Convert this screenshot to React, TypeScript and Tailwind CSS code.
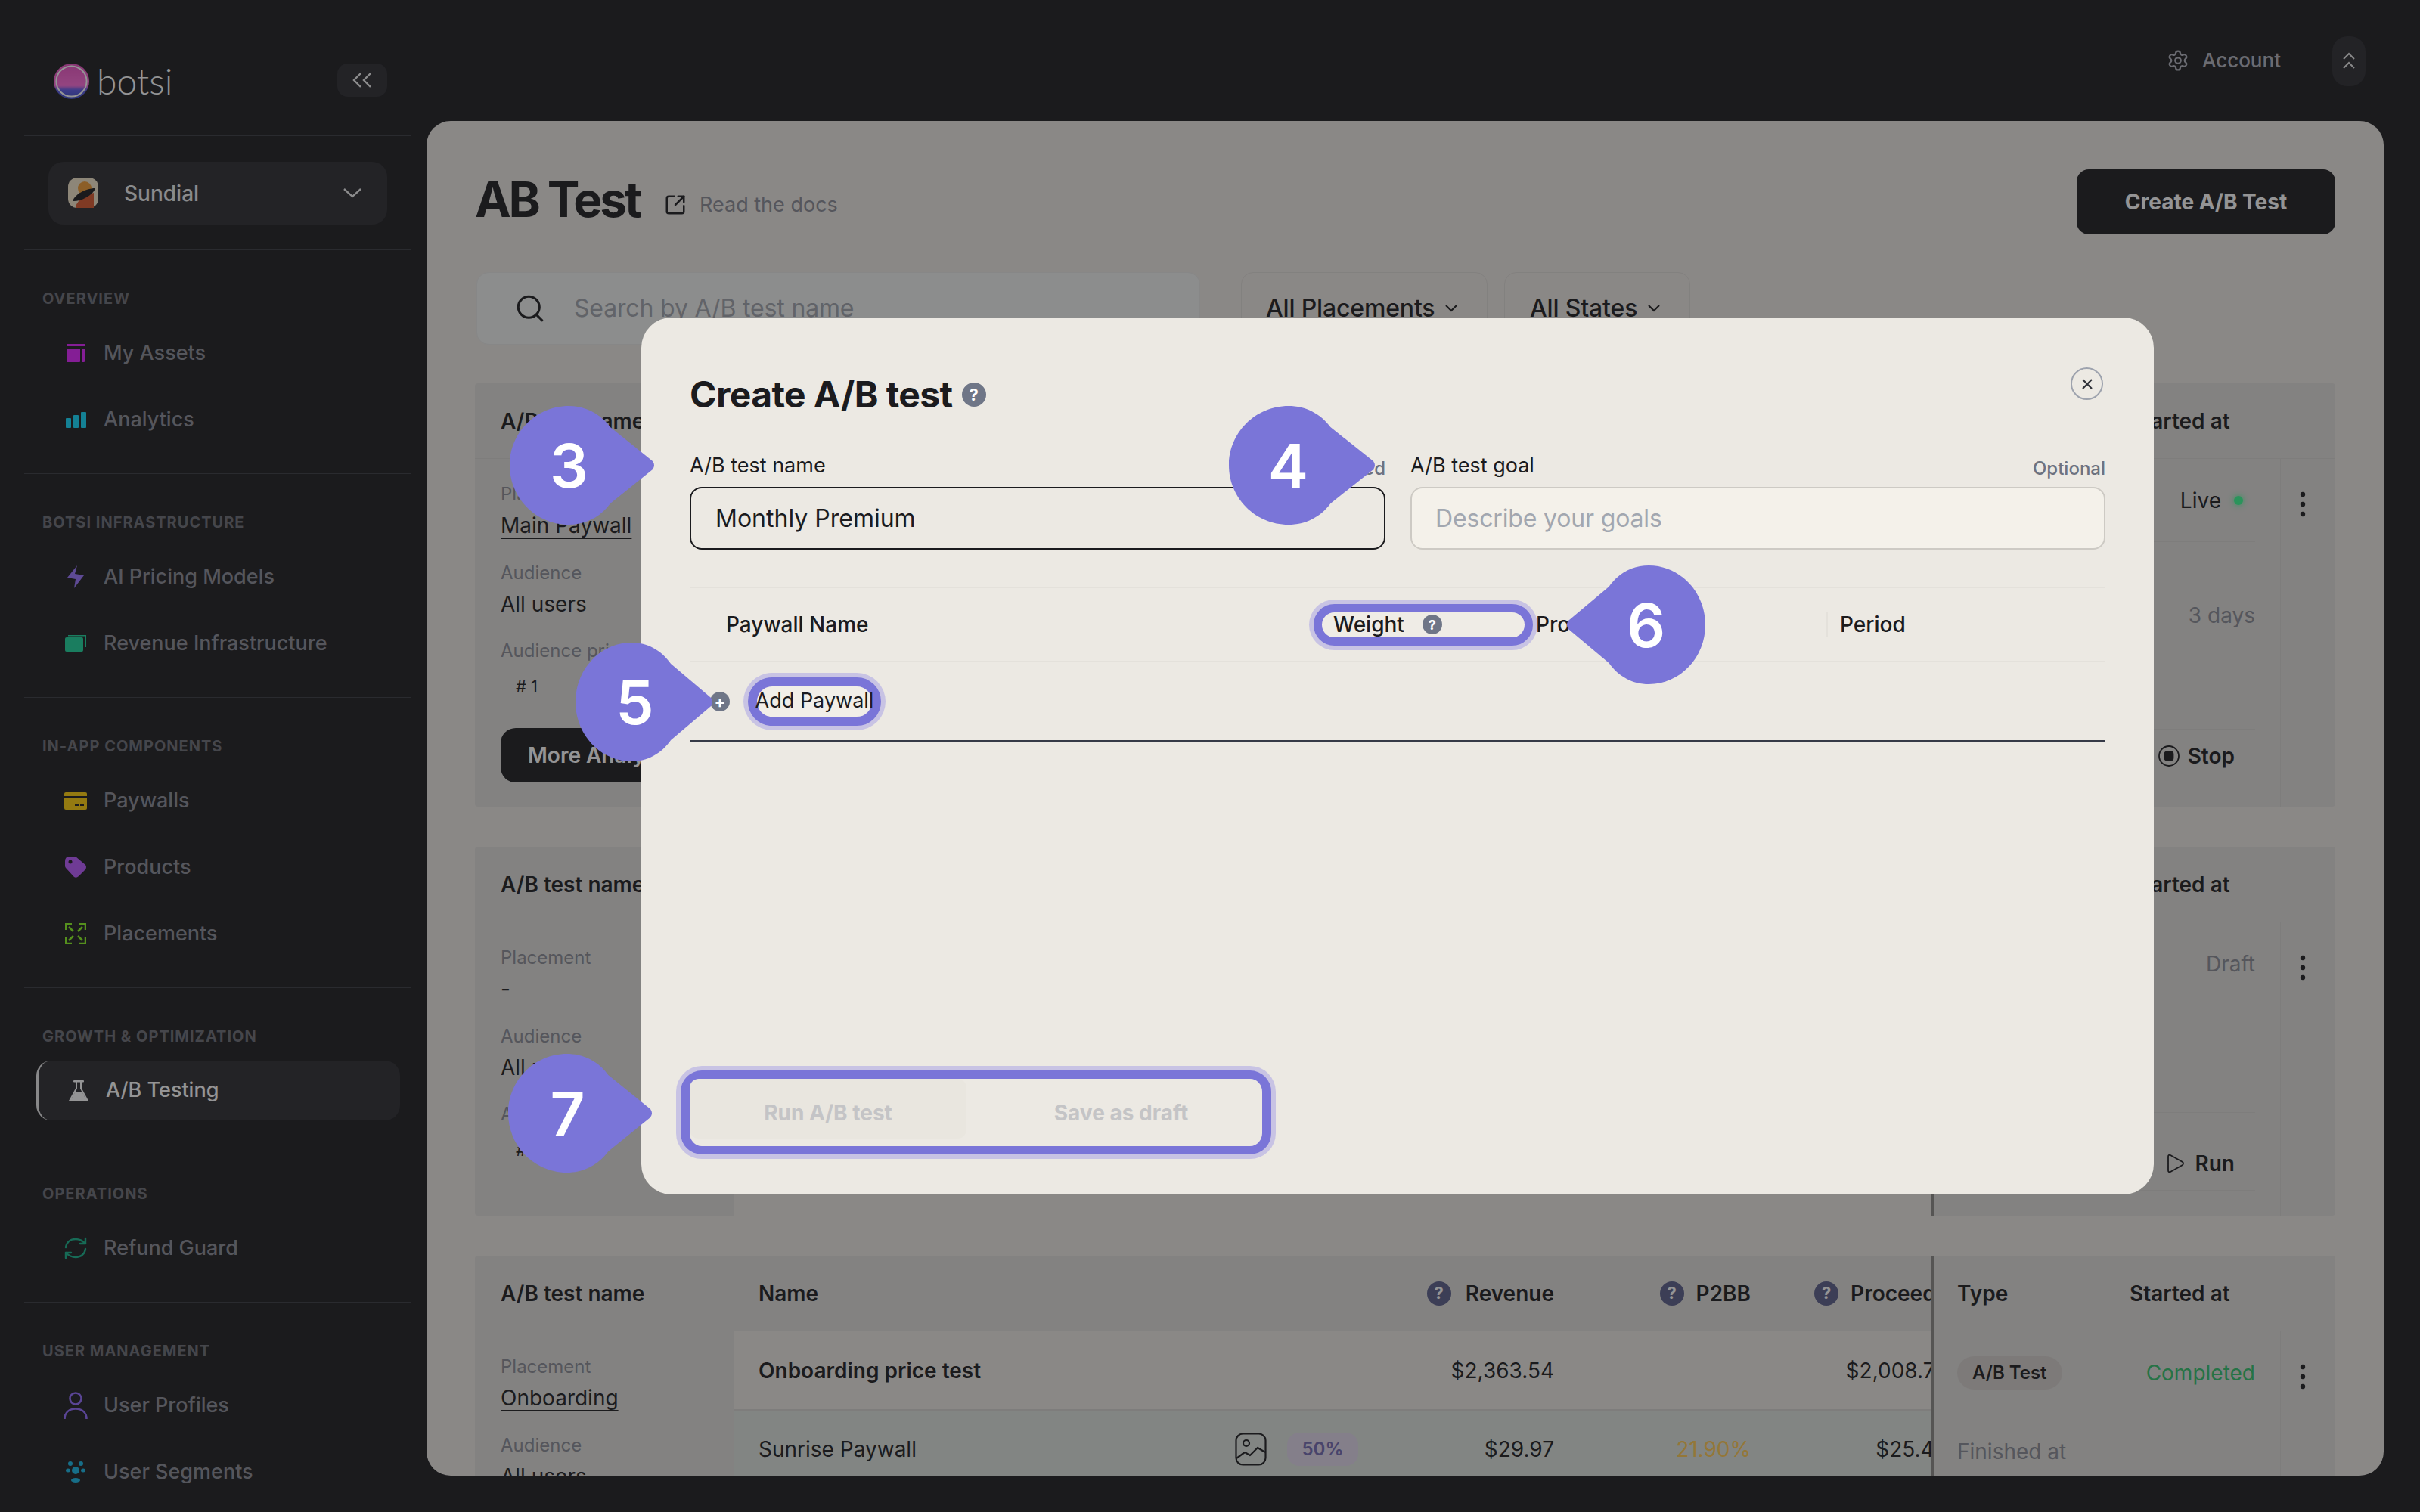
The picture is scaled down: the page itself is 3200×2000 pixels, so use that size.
import type { ReactNode } from "react";
import { Search, Settings, SquareArrowOutUpRight } from "lucide-react";

type NavItem = { label: string; icon: ReactNode; active?: boolean };

const navSections: { title: string; items: NavItem[] }[] = [
  {
    title: "OVERVIEW",
    items: [
      {
        label: "My Assets",
        icon: (
          <svg viewBox="0 0 24 24" className="h-[24px] w-[24px]" fill="#e021ff">
            <rect x="0" y="0" width="24" height="3" />
            <rect x="0" y="6" width="18" height="18" rx="1" />
            <rect x="20" y="6" width="4" height="18" rx="1" />
          </svg>
        ),
      },
      {
        label: "Analytics",
        icon: (
          <svg viewBox="0 0 27 21" className="h-[21px] w-[27px]" fill="#0edcff">
            <rect x="0" y="8" width="7" height="13" rx="1" />
            <rect x="10" y="4" width="7" height="17" rx="1" />
            <rect x="20" y="0" width="7" height="21" rx="1" />
          </svg>
        ),
      },
    ],
  },
  {
    title: "BOTSI INFRASTRUCTURE",
    items: [
      {
        label: "AI Pricing Models",
        icon: (
          <svg viewBox="0 0 22 30" className="h-[30px] w-[22px]" fill="#9a74ff">
            <path d="M13 0 L10 11 L22 13 L9 30 L11 18 L0 16 Z" />
          </svg>
        ),
      },
      {
        label: "Revenue Infrastructure",
        icon: (
          <svg viewBox="0 0 28 22" className="h-[22px] w-[28px]" fill="#19d49a">
            <path d="M4 0 H28 V16 H26.5 V1.5 H4 Z" />
            <rect x="0" y="3" width="24" height="19" rx="2" />
          </svg>
        ),
      },
    ],
  },
  {
    title: "IN-APP COMPONENTS",
    items: [
      {
        label: "Paywalls",
        icon: (
          <svg viewBox="0 0 30 23" className="h-[23px] w-[30px]">
            <rect width="30" height="23" rx="2" fill="#ffcf06" />
            <rect y="5" width="30" height="2" fill="#1b1b1e" />
            <rect x="14" y="16" width="5" height="2" fill="#1b1b1e" />
            <rect x="21" y="16" width="5" height="2" fill="#1b1b1e" />
          </svg>
        ),
      },
      {
        label: "Products",
        icon: (
          <svg viewBox="0 0 28 28" className="h-[28px] w-[28px]">
            <path d="M6 0 H14 L27 11 Q29 14 27 17 L18 26 Q15 29 12 27 L1 15 Q0 14 0 12 V6 Q0 0 6 0 Z" fill="#ba58ff" />
            <circle cx="7" cy="7" r="2.5" fill="#1b1b1e" />
          </svg>
        ),
      },
      {
        label: "Placements",
        icon: (
          <svg viewBox="0 0 28 28" className="h-[28px] w-[28px]" fill="none" stroke="#88f81d" strokeWidth="2.5">
            <path d="M1 9 V1 H9 M19 1 H27 V9 M27 19 V27 H19 M9 27 H1 V19" />
            <path d="M5 5 L11 11 M23 5 L17 11 M23 23 L17 17 M5 23 L11 17" />
          </svg>
        ),
      },
    ],
  },
  {
    title: "GROWTH & OPTIMIZATION",
    items: [
      {
        label: "A/B Testing",
        active: true,
        icon: (
          <svg viewBox="0 0 26 28" className="h-[28px] w-[26px]" fill="#ffffff">
            <rect x="6" y="0" width="14" height="2.5" rx="1" />
            <path d="M9 2 H11 V11 L4 24 H22 L15 11 V2 H17 V10.5 L26 27 Q26 28 24 28 H2 Q0 28 0 27 L9 10.5 Z" />
            <path d="M8 16 H18 L23 26 H3 Z" />
          </svg>
        ),
      },
    ],
  },
  {
    title: "OPERATIONS",
    items: [
      {
        label: "Refund Guard",
        icon: (
          <svg viewBox="0 0 30 30" className="h-[30px] w-[30px]" fill="none" stroke="#13b289" strokeWidth="2.4" strokeLinecap="round" strokeLinejoin="round">
            <path d="M2 14 C3 7 8 3 15 3 C20 3 24 5 28 9" />
            <path d="M28 2 V9 H21" />
            <path d="M28 16 C27 23 22 27 15 27 C10 27 6 25 2 21" />
            <path d="M2 28 V21 H9" />
          </svg>
        ),
      },
    ],
  },
  {
    title: "USER MANAGEMENT",
    items: [
      {
        label: "User Profiles",
        icon: (
          <svg viewBox="0 0 32 36" className="h-[36px] w-[32px]" fill="none" stroke="#926aff" strokeWidth="2.6">
            <circle cx="16" cy="9" r="7.5" />
            <path d="M1.5 36 C1.5 27 8 22.5 16 22.5 C24 22.5 30.5 27 30.5 36" />
          </svg>
        ),
      },
      {
        label: "User Segments",
        icon: (
          <svg viewBox="0 0 26 28" className="h-[28px] w-[26px]" fill="#13b8e6">
            <circle cx="6" cy="3" r="3" />
            <circle cx="20" cy="3" r="3" />
            <circle cx="13" cy="12" r="5" />
            <ellipse cx="3" cy="12" rx="3" ry="2.5" />
            <ellipse cx="23" cy="12" rx="3" ry="2.5" />
            <ellipse cx="13" cy="25" rx="6" ry="3" />
          </svg>
        ),
      },
    ],
  },
];

function Sidebar() {
  return (
    <aside className="flex w-[564px] shrink-0 flex-col pl-[32px] pr-[20px]">
      <div className="flex h-[180px] shrink-0 items-start border-b border-[#37393f]">
        <div className="ml-[39px] mt-[84px] flex items-center gap-[10px]">
          <svg viewBox="0 0 48 48" className="h-[47px] w-[47px]">
            <defs>
              <linearGradient id="orb" x1="0" y1="0" x2="0" y2="1">
                <stop offset="0" stopColor="#e850c0" />
                <stop offset="0.62" stopColor="#ff6ad8" />
                <stop offset="0.75" stopColor="#5a58e8" />
                <stop offset="1" stopColor="#3a4ac8" />
              </linearGradient>
            </defs>
            <circle cx="24" cy="24" r="24" fill="url(#orb)" />
            <circle cx="24" cy="24" r="20.5" fill="none" stroke="#ffffff" strokeWidth="2" />
          </svg>
          <span className="-mt-[2px] font-['Lato',sans-serif] text-[48px] leading-[48px] font-light text-white">botsi</span>
        </div>
        <button className="ml-auto mr-[32px] mt-[84px] flex h-[44px] w-[66px] items-center justify-center rounded-[14px] bg-[#2a2a2e]">
          <svg viewBox="0 0 26 20" className="h-[20px] w-[26px]" fill="none" stroke="#f0f0f0" strokeWidth="2.4">
            <path d="M11 1 L2 10 L11 19 M24 1 L15 10 L24 19" />
          </svg>
        </button>
      </div>

      <div className="flex h-[151px] shrink-0 items-center border-b border-[#37393f] px-[32px]">
        <div className="flex h-[83px] w-full items-center rounded-[20px] bg-[#2a2a2e] pl-[26px] pr-[34px]">
          <svg viewBox="0 0 40 40" className="h-[40px] w-[40px]">
            <rect width="40" height="40" rx="12" fill="#f1e4c8" />
            <circle cx="22" cy="14" r="9" fill="#f09a30" />
            <path d="M10 38 Q14 26 34 20 V40 H10 Z" fill="#d8562a" />
            <path d="M6 31 C10 20 26 14 36 14 C34 22 18 32 6 31 Z" fill="#1b1b1e" />
          </svg>
          <span className="ml-[34px] mt-[1px] text-[28px] font-medium text-[#edeeef]">Sundial</span>
          <svg viewBox="0 0 24 13" className="ml-auto h-[13px] w-[24px]" fill="none" stroke="#f0f0f0" strokeWidth="2.4">
            <path d="M1 1 L12 11 L23 1" />
          </svg>
        </div>
      </div>

      {navSections.map((section, i) => (
        <section
          key={section.title}
          className={`shrink-0 pt-[52px] pb-[27px] ${i < navSections.length - 1 ? "border-b border-[#37393f]" : ""}`}
        >
          <h3 className="h-[24px] pl-[24px] text-[20px] leading-[24px] font-bold tracking-[0.05em] text-[#6a6c74]">{section.title}</h3>
          <ul className="mt-[16px]">
            {section.items.map((item) =>
              item.active ? (
                <li key={item.label} className="h-[88px] pt-[4px]">
                  <div className="ml-[16px] flex h-[79px] w-[481px] items-center rounded-[20px] border-l-[3px] border-[#e8e8e8] bg-[#2a2a2e] pl-[37px]">
                    <span className="flex w-[32px] justify-center">{item.icon}</span>
                    <span className="ml-[20px] text-[27px] font-medium text-white">{item.label}</span>
                  </div>
                </li>
              ) : (
                <li key={item.label} className="flex h-[88px] items-center pl-[52px]">
                  <span className="flex w-[32px] justify-center">{item.icon}</span>
                  <span className="ml-[21px] text-[27px] font-medium text-[#888a94]">{item.label}</span>
                </li>
              ),
            )}
          </ul>
        </section>
      ))}
    </aside>
  );
}

function HelpDot({ size, tone }: { size: string; tone: string }) {
  return (
    <span className={`flex shrink-0 items-center justify-center rounded-full font-bold text-white ${size} ${tone}`}>?</span>
  );
}

function Field({ label, children, tall }: { label: string; children: ReactNode; tall?: boolean }) {
  return (
    <div>
      <div className="h-[32px] text-[24px] leading-[32px] text-[#888a94]">{label}</div>
      <div className={`mt-[5px] text-[#1b1b1e] ${tall ? "h-[52px] pl-[20px] text-[22px] leading-[52px]" : "h-[40px] text-[28px] leading-[40px]"}`}>{children}</div>
    </div>
  );
}

function Metric({ label, width }: { label: string; width: string }) {
  return (
    <div className={`flex shrink-0 items-center justify-end gap-[16px] ${width}`}>
      <HelpDot size="h-[32px] w-[32px] text-[22px]" tone="bg-[#595d89]" />
      <span className="text-[28px] font-semibold text-[#1b1b1e]">{label}</span>
    </div>
  );
}

function Dots() {
  return (
    <svg viewBox="0 0 10 34" className="h-[34px] w-[10px]" fill="#1b1b1e">
      <circle cx="5" cy="4" r="3.2" />
      <circle cx="5" cy="17" r="3.2" />
      <circle cx="5" cy="30" r="3.2" />
    </svg>
  );
}

function TestCard({
  height,
  placement,
  underline,
  priority,
  more,
  midRows,
  status,
  middle,
  action,
}: {
  height: string;
  placement: string;
  underline?: boolean;
  priority?: boolean;
  more?: boolean;
  midRows?: ReactNode;
  status: ReactNode;
  middle: ReactNode;
  action?: ReactNode;
}) {
  return (
    <div className={`flex w-full shrink-0 overflow-hidden rounded-[4px] bg-[#dfddd9] ${height}`}>
      <div className="w-[342px] shrink-0">
        <div className="flex h-[100px] items-center border-b border-[#d6d4d0] pl-[34px] text-[28px] font-semibold text-[#1b1b1e]">A/B test name</div>
        <div className="flex flex-col gap-[27px] pl-[34px] pt-[31px]">
          <Field label="Placement">
            <span className={underline ? "underline underline-offset-[6px] decoration-2" : ""}>{placement}</span>
          </Field>
          <Field label="Audience">All users</Field>
          {priority && (
            <div className="-mt-[1px]">
              <Field label="Audience priority" tall>
                # 1
              </Field>
            </div>
          )}
        </div>
        {more && (
          <button className="ml-[34px] mt-[29px] flex h-[72px] w-[400px] items-center whitespace-nowrap rounded-[20px] bg-[#1b1b1e] pl-[36px] text-[28px] font-semibold text-white">
            More Analytics
          </button>
        )}
      </div>

      <div className="min-w-0 flex-1 overflow-hidden">
        <div className="flex h-[100px] w-[1700px] items-center border-b border-[#d6d4d0]">
          <div className="w-[1085px] shrink-0 pl-[33px]">
            <div className="flex items-center justify-between">
              <span className="text-[28px] font-semibold text-[#1b1b1e]">Name</span>
              <div className="flex items-center gap-[19px]">
                <HelpDot size="h-[32px] w-[32px] text-[22px]" tone="bg-[#595d89]" />
                <span className="text-[28px] font-semibold text-[#1b1b1e]">Revenue</span>
              </div>
            </div>
          </div>
          <Metric label="P2BB" width="w-[260px]" />
          <Metric label="Proceeds" width="w-[260px]" />
        </div>
        {midRows ?? <div className="h-full bg-[#ece8e3]" />}
      </div>

      <div className="flex w-[534px] shrink-0 flex-col border-l-[3px] border-[#8a8884]">
        <div className="flex h-[100px] shrink-0 items-center border-b border-[#d6d4d0] pl-[31px] text-[28px] font-semibold text-[#1b1b1e]">
          <span className="w-[228px]">Type</span>
          <span>Started at</span>
        </div>
        <div className="flex flex-1">
          <div className="w-[458px] shrink-0 pl-[31px] pr-[33px]">
            <div className="flex h-[110px] items-center justify-between border-b border-[#d6d4d0]">
              <span className="flex h-[44px] items-center rounded-full bg-[#d4cfcb] px-[20px] text-[24px] font-semibold text-[#1b1b1e]">A/B Test</span>
              {status}
            </div>
            {middle}
            {action}
          </div>
          <div className="flex-1 border-l border-[#d6d4d0] pl-[24px] pt-[43px]">
            <Dots />
          </div>
        </div>
      </div>
    </div>
  );
}

function MainPanel() {
  return (
    <main className="flex min-w-0 flex-1 flex-col pr-[48px] pb-[48px]">
      <div className="flex h-[160px] shrink-0 items-start justify-end pr-[24px]">
        <div className="mr-[68px] mt-[60px] flex items-center gap-[17px] text-[#b0b2bc]">
          <Settings size={30} strokeWidth={1.8} />
          <span className="text-[26px] font-medium">Account</span>
        </div>
        <button className="mt-[48px] flex h-[66px] w-[44px] flex-col items-center justify-center rounded-[20px] bg-[#2a2a2e]">
          <svg viewBox="0 0 16 24" className="h-[24px] w-[16px]" fill="none" stroke="#e8e8e8" strokeWidth="2">
            <path d="M1 9 L8 2 L15 9 M1 21 L8 14 L15 21" />
          </svg>
        </button>
      </div>

      <div className="flex min-h-0 flex-1 flex-col gap-[53px] overflow-hidden rounded-[32px] bg-[#ece8e3] pl-[66px] pr-[64px] pt-[64px]">
        <div>
          <div className="flex h-[86px] items-center">
            <h1 className="-ml-[2px] -mt-[6px] text-[64px] leading-none font-bold tracking-[-0.05em] text-[#1b1b1e]">AB Test</h1>
            <SquareArrowOutUpRight size={30} strokeWidth={2} className="ml-[32px] mt-[8px] text-[#1b1b1e]" />
            <span className="ml-[17px] mt-[8px] text-[27px] text-[#888a94]">Read the docs</span>
            <button className="ml-auto h-[86px] w-[342px] rounded-[16px] bg-[#1b1b1e] text-[28px] font-bold text-white">Create A/B Test</button>
          </div>
          <div className="mt-[50px] flex h-[96px] items-center">
            <div className="flex h-full w-[957px] items-center rounded-[16px] border border-[#e6e6e4] bg-[#f0f2f0] pl-[49px]">
              <Search size={42} strokeWidth={1.8} className="text-[#1b1b1e]" />
              <span className="ml-[37px] text-[32px] tracking-[-0.005em] text-[#9fa3ab]">Search by A/B test name</span>
            </div>
            <div className="ml-[54px] flex h-full w-[326px] items-center gap-[14px] rounded-[16px] border border-[#dedbd6] pl-[32px] text-[32px] font-medium tracking-[-0.005em] text-[#1b1b1e]">
              All Placements
              <svg viewBox="0 0 16 10" className="h-[10px] w-[16px]" fill="none" stroke="#1b1b1e" strokeWidth="2.2"><path d="M1 1 L8 8 L15 1" /></svg>
            </div>
            <div className="ml-[22px] flex h-full w-[246px] items-center gap-[14px] rounded-[16px] border border-[#dedbd6] pl-[33px] text-[32px] font-medium tracking-[-0.005em] text-[#1b1b1e]">
              All States
              <svg viewBox="0 0 16 10" className="h-[10px] w-[16px]" fill="none" stroke="#1b1b1e" strokeWidth="2.2"><path d="M1 1 L8 8 L15 1" /></svg>
            </div>
          </div>
        </div>

        <div className="-ml-[2px] -mt-[2px] flex flex-col gap-[53px]">
          <TestCard
            height="h-[560px]"
            placement="Main Paywall"
            underline
            priority
            more
            status={
              <span className="mr-[16px] flex items-center gap-[17px] text-[28px] text-[#1b1b1e]">
                Live
                <span className="h-[12px] w-[12px] rounded-full bg-[#37ff92] shadow-[0_0_8px_#37ff92]" />
              </span>
            }
            middle={
              <div className="h-[248px] border-b border-[#d6d4d0] pt-[82px] text-right text-[28px] leading-[30px] text-[#888a94]">3 days</div>
            }
            action={
              <div className="flex h-[70px] items-center justify-end gap-[11px] pr-[27px] text-[28px] font-semibold text-[#1b1b1e]">
                <svg viewBox="0 0 28 28" className="h-[28px] w-[28px]" fill="none" stroke="#1b1b1e" strokeWidth="1.8">
                  <circle cx="14" cy="14" r="13" />
                  <rect x="8.5" y="8.5" width="11" height="11" rx="3" fill="#1b1b1e" />
                </svg>
                Stop
              </div>
            }
          />
          <TestCard
            height="h-[488px]"
            placement="-"
            priority
            status={<span className="text-[28px] text-[#888a94]">Draft</span>}
            middle={<div className="h-[142px] border-b border-[#d6d4d0]" />}
            action={
              <div className="flex h-[103px] items-center justify-end gap-[13px] border-b border-[#d6d4d0] pr-[27px] pt-[32px] text-[28px] font-semibold text-[#1b1b1e]">
                <svg viewBox="0 0 24 26" className="h-[26px] w-[24px]" fill="none" stroke="#1b1b1e" strokeWidth="1.8" strokeLinejoin="round">
                  <path d="M2 4 Q2 1 5 2 L21 11 Q23 13 21 15 L5 24 Q2 25 2 22 Z" />
                </svg>
                Run
              </div>
            }
          />
          <TestCard
            height="h-[600px]"
            placement="Onboarding"
            underline
            midRows={
              <>
                <div className="flex h-[105px] w-[1700px] items-center border-b-[2px] border-[#d6d4d0] bg-[#ece8e3] text-[28px] text-[#1b1b1e]">
                  <div className="flex w-[1085px] shrink-0 items-center justify-between pl-[33px]">
                    <span className="font-semibold">Onboarding price test</span>
                    <span>$2,363.54</span>
                  </div>
                  <div className="w-[260px] shrink-0" />
                  <div className="w-[260px] shrink-0 text-right">$2,008.74</div>
                </div>
                <div className="flex h-[120px] w-[1700px] items-center bg-[#dde3dd] pb-[18px] text-[28px] text-[#1b1b1e]">
                  <div className="flex w-[1085px] shrink-0 items-center pl-[33px]">
                    <span className="w-[630px]">Sunrise Paywall</span>
                    <svg viewBox="0 0 42 44" className="h-[44px] w-[42px]" fill="none" stroke="#1b1b1e" strokeWidth="2.2" strokeLinejoin="round">
                      <rect x="1.5" y="1.5" width="39" height="41" rx="9" />
                      <circle cx="15" cy="14" r="4" />
                      <path d="M2 34 L13 26 L20 30 L30 20 L40 26" />
                    </svg>
                    <span className="ml-[27px] flex h-[44px] w-[94px] items-center justify-center rounded-[16px] bg-[#e0d8ea] text-[24px] font-semibold text-[#7068b0]">50%</span>
                    <span className="ml-auto">$29.97</span>
                  </div>
                  <div className="w-[260px] shrink-0 text-right text-[#ffc850]">21.90%</div>
                  <div className="w-[260px] shrink-0 text-right">$25.48</div>
                </div>
              </>
            }
            status={<span className="text-[28px] text-[#2fc06a]">Completed</span>}
            middle={<div className="pt-[34px] text-[28px] leading-[30px] text-[#888a94]">Finished at</div>}
          />
        </div>
      </div>
    </main>
  );
}

function Callout({ n, className, flip }: { n: number; className: string; flip?: boolean }) {
  return (
    <div className={`absolute h-[157px] ${className}`}>
      <svg viewBox="0 0 192 157" preserveAspectRatio="none" className={`absolute inset-0 h-full w-full ${flip ? "-scale-x-100" : ""}`}>
        <path
          d="M78 0 C100 0 120 10 133 28 L189 73 Q193 78.5 189 84 L133 129 C120 147 100 157 78 157 C35 157 0 122 0 78.5 C0 35 35 0 78 0 Z"
          fill="#7a75d8"
        />
      </svg>
      <div className={`absolute top-0 flex h-[157px] w-[157px] items-center justify-center text-[80px] font-semibold text-white ${flip ? "right-0" : "left-0"}`}>{n}</div>
    </div>
  );
}

function CreateModal() {
  return (
    <div className="absolute left-[848px] top-[420px] flex h-[1160px] w-[2000px] flex-col rounded-[40px] bg-[#ece9e3] px-[64px] pb-[53px] pt-[72px] text-[#1b1b1e]">
      <div className="flex h-[60px] items-start justify-between">
        <div className="flex h-[60px] items-center gap-[12px]">
          <h2 className="text-[48px] leading-none font-bold tracking-[-0.012em]">Create A/B test</h2>
          <HelpDot size="h-[32px] w-[32px] text-[22px]" tone="bg-[#6f7687]" />
        </div>
        <button className="-mt-[6px] mr-[3px] flex h-[43px] w-[43px] items-center justify-center rounded-full border-[2.5px] border-[#9ea3ae]">
          <svg viewBox="0 0 16 16" className="h-[16px] w-[16px]" fill="none" stroke="#30323a" strokeWidth="2.2">
            <path d="M2 2 L14 14 M14 2 L2 14" />
          </svg>
        </button>
      </div>

      <div className="mt-[46px] grid grid-cols-[920px_919px] gap-x-[33px]">
        <div>
          <div className="flex h-[36px] items-center justify-between">
            <span className="text-[27px]">A/B test name</span>
            <span className="mt-[8px] text-[24px] font-medium text-[#6d7280]">Required</span>
          </div>
          <div className="mt-[10px] flex h-[83px] items-center rounded-[16px] border-[2.5px] border-[#1b1b1e] pl-[32px] text-[32px]">Monthly Premium</div>
        </div>
        <div>
          <div className="flex h-[36px] items-center justify-between">
            <span className="text-[27px]">A/B test goal</span>
            <span className="mt-[8px] text-[24px] font-medium text-[#6d7280]">Optional</span>
          </div>
          <div className="mt-[10px] flex h-[83px] items-center rounded-[16px] border-[2.5px] border-[#cdcac4] bg-[#f4f1ea] pl-[31px] text-[32px] tracking-[-0.005em] text-[#a2a7b0]">Describe your goals</div>
        </div>
      </div>

      <div className="mt-[49px] flex h-[100px] items-center border-y-2 border-[#e4e1db] text-[28px] font-medium">
        <div className="w-[825px] shrink-0 pl-[48px]">Paywall Name</div>
        <div className="flex h-[55px] w-[290px] shrink-0 items-center gap-[24px] rounded-[28px] border-[11px] border-[#7a75d8] bg-[#efece6] pl-[15px] shadow-[0_0_0_6px_#c8c3e4]">
          Weight
          <HelpDot size="h-[26px] w-[26px] text-[18px]" tone="bg-[#6f7687]" />
        </div>
        <div className="w-[390px] shrink-0 border-r-2 border-[#e4e1db] pl-[4px] leading-[32px]">Proceeds</div>
        <div className="pl-[16px]">Period</div>
      </div>

      <div className="flex h-[105px] items-center border-b-2 border-[#363a47] pl-[27px]">
        <span className="flex h-[26px] w-[26px] items-center justify-center rounded-full bg-[#6f7687] text-[22px] leading-none font-bold text-white">+</span>
        <div className="ml-[24px] flex h-[64px] w-[176px] items-center justify-center whitespace-nowrap rounded-full border-[12px] border-[#7a75d8] bg-[#f1eee8] text-[27px] shadow-[0_0_0_6px_#c8c3e4]">
          Add Paywall
        </div>
      </div>

      <div className="-ml-[12px] mt-auto flex h-[111px] w-[781px] rounded-[28px] border-[11px] border-x-[12px] border-[#7a75d8] bg-[#ece9e3] text-[28px] font-bold text-[#c4c4c6] shadow-[0_0_0_6px_#c8c3e4]">
        <div className="flex h-[79px] w-[366px] items-center justify-center rounded-[12px] bg-[#e9e6df] pt-[10px]">Run A/B test</div>
        <div className="ml-[18px] flex h-[79px] flex-1 items-center justify-center pt-[10px]">Save as draft</div>
      </div>
    </div>
  );
}

export default function App() {
  return (
    <div className="relative flex h-[2000px] w-[3200px] overflow-hidden bg-[#1b1b1e] font-[Inter,sans-serif]">
      <Sidebar />
      <MainPanel />
      {/* scrim under the dialog */}
      <div className="absolute inset-0 bg-[#1b1b1e]/[0.47]" />
      <CreateModal />
      <Callout n={3} className="left-[674px] top-[537px] w-[192px]" />
      <Callout n={4} className="left-[1625px] top-[537px] w-[194px]" />
      <Callout n={5} className="left-[761px] top-[850px] w-[182px]" />
      <Callout n={6} flip className="left-[2071px] top-[748px] w-[184px]" />
      <Callout n={7} className="left-[672px] top-[1394px] w-[191px]" />
    </div>
  );
}
